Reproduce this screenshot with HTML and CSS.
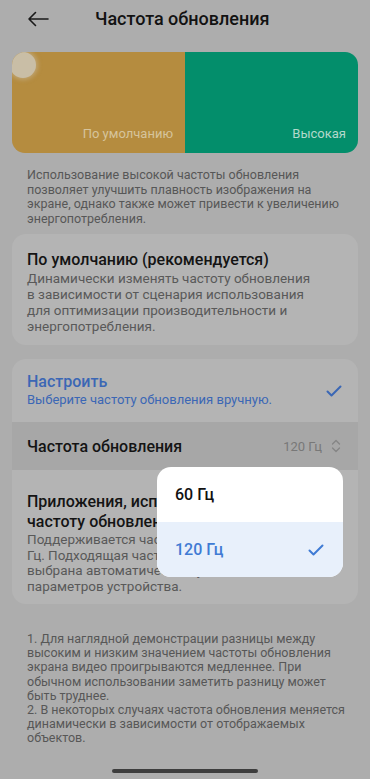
FILE: index.html
```html
<!DOCTYPE html>
<html lang="ru">
<head>
<meta charset="utf-8">
<title>Частота обновления</title>
<link rel="stylesheet" href="styles.css">
</head>
<body>
<div class="screen">
  <header class="header">
    <svg class="back" width="24" height="16" viewBox="0 0 24 16"><path d="M22 8H3M9.5 1.5L3 8l6.5 6.5" fill="none" stroke="#1a1a1a" stroke-width="1.6" stroke-linecap="round" stroke-linejoin="round"/></svg>
    <h1 class="title">Частота обновления</h1>
  </header>

  <div class="banner">
    <div class="half gold"><span class="dot"></span><span class="blabel">По умолчанию</span></div>
    <div class="half green"><span class="blabel">Высокая</span></div>
  </div>

  <p class="desc">Использование высокой частоты обновления<br>позволяет улучшить плавность изображения на<br>экране, однако также может привести к увеличению<br>энергопотребления.</p>

  <section class="card card1">
    <div class="ctitle">По умолчанию (рекомендуется)</div>
    <div class="csub">Динамически изменять частоту обновления<br>в зависимости от сценария использования<br>для оптимизации производительности и<br>энергопотребления.</div>
  </section>

  <section class="card card2">
    <div class="custom">
      <div class="custom-text">
        <div class="ctitle blue">Настроить</div>
        <div class="csub2 blue">Выберите частоту обновления вручную.</div>
      </div>
      <svg class="check" width="16" height="12" viewBox="0 0 16 12"><path d="M1.5 6.5l4 4L14.5 1.5" fill="none" stroke="#3b67b5" stroke-width="2" stroke-linecap="round" stroke-linejoin="round"/></svg>
    </div>
    <div class="band">
      <span class="band-label">Частота обновления</span>
      <span class="band-value">120 Гц
        <svg class="updown" width="10" height="16" viewBox="0 0 10 16"><path d="M1.5 6L5 2.5 8.5 6M1.5 10L5 13.5 8.5 10" fill="none" stroke="#858585" stroke-width="1.3" stroke-linecap="round" stroke-linejoin="round"/></svg>
      </span>
    </div>
    <div class="apps">
      <div class="ctitle">Приложения, использующие высокую<br>частоту обновления</div>
      <div class="csub">Поддерживается частота обновления до 120<br>Гц. Подходящая частота будет<br>выбрана автоматически с учетом<br>параметров устройства.</div>
    </div>
  </section>

  <p class="foot">1. Для наглядной демонстрации разницы между<br>высоким и низким значением частоты обновления<br>экрана видео проигрываются медленнее. При<br>обычном использовании заметить разницу может<br>быть труднее.<br>2. В некоторых случаях частота обновления меняется<br>динамически в зависимости от отображаемых<br>объектов.</p>

  <div class="home-wrap"><div class="home"></div></div>

  <div class="popup">
    <div class="opt">60 Гц</div>
    <div class="opt sel">120 Гц
      <svg width="16" height="12" viewBox="0 0 16 12"><path d="M1.5 6.5l4 4L14.5 1.5" fill="none" stroke="#3f7bd4" stroke-width="2" stroke-linecap="round" stroke-linejoin="round"/></svg>
    </div>
  </div>
</div>
</body>
</html>
```

FILE: styles.css
```css
html, body {
  margin: 0;
  padding: 0;
  background: #adadad;
}
body {
  font-family: Roboto, "Noto Sans", "Liberation Sans", sans-serif;
  color: #141414;
}
.screen {
  position: relative;
  width: 370px;
  height: 779px;
  overflow: hidden;
  background: #adadad;
}
.header {
  height: 38px;
  display: flex;
  align-items: center;
  padding-left: 26px;
}
.back { display: block; }
.title {
  margin: 0 0 0 45px;
  font-size: 18px;
  font-weight: 500;
  color: #121212;
  line-height: 24px;
}
.banner {
  margin: 14px 12px 0;
  height: 101px;
  border-radius: 13px;
  overflow: hidden;
  display: flex;
}
.half {
  flex: 1;
  position: relative;
  display: flex;
  align-items: flex-end;
  justify-content: flex-end;
  padding: 0 12px 11px 0;
}
.gold { background: #b58c3f; }
.green { background: #038e6b; }
.dot {
  position: absolute;
  left: -2px;
  top: 0;
  width: 26px;
  height: 26px;
  border-radius: 50%;
  background: #c9bea6;
  box-shadow: 0 0 4px 2px rgba(201, 190, 166, 0.5);
}
.blabel {
  font-size: 13px;
  line-height: 16px;
}
.gold .blabel { color: #d6c49c; }
.green .blabel { color: #b3d9cc; }
.desc {
  margin: 15px 27px 0;
  font-size: 12.5px;
  line-height: 14.5px;
  color: #575757;
  white-space: nowrap;
}
.card {
  margin: 0 12px;
  background: #b4b4b4;
  border-radius: 14px;
}
.card1 {
  margin-top: 8px;
  padding: 16px 15px 11px;
}
.ctitle {
  font-size: 16px;
  font-weight: 500;
  line-height: 20px;
  color: #141414;
  white-space: nowrap;
}
.csub {
  font-size: 13.5px;
  line-height: 16px;
  color: #595959;
  white-space: nowrap;
}
.card2 {
  margin-top: 14px;
  padding: 13px 0 10px;
}
.custom {
  display: flex;
  align-items: center;
  justify-content: space-between;
  padding: 0 16px 14px 15px;
}
.blue { color: #3b67b5; }
.csub2 {
  font-size: 13px;
  line-height: 16px;
  white-space: nowrap;
}
.check { margin-top: 2px; }
.band {
  height: 48px;
  background: #a7a7a7;
  display: flex;
  align-items: center;
  justify-content: space-between;
  padding: 0 17px 0 15px;
}
.band-label {
  font-size: 16px;
  font-weight: 500;
  color: #141414;
}
.band-value {
  display: flex;
  align-items: center;
  gap: 9px;
  font-size: 13px;
  color: #787878;
}
.apps {
  padding: 22px 15px 0;
}
.apps .csub { line-height: 15.5px; }
.foot {
  margin: 28px 27px 0;
  font-size: 12.5px;
  line-height: 14.2px;
  color: #575757;
  white-space: nowrap;
}
.home-wrap {
  position: absolute;
  left: 0;
  right: 0;
  bottom: 6px;
  display: flex;
  justify-content: center;
}
.home {
  width: 146px;
  height: 4px;
  border-radius: 2px;
  background: #3d3d3d;
}
.popup {
  position: absolute;
  left: 157px;
  top: 467px;
  width: 186px;
  border-radius: 14px;
  background: #ffffff;
  overflow: hidden;
}
.opt {
  height: 55px;
  display: flex;
  align-items: center;
  justify-content: space-between;
  padding: 0 19px 0 18px;
  font-size: 16px;
  font-weight: 500;
  color: #111;
}
.opt.sel {
  background: #e8f0fb;
  color: #3f7bd4;
}
```
